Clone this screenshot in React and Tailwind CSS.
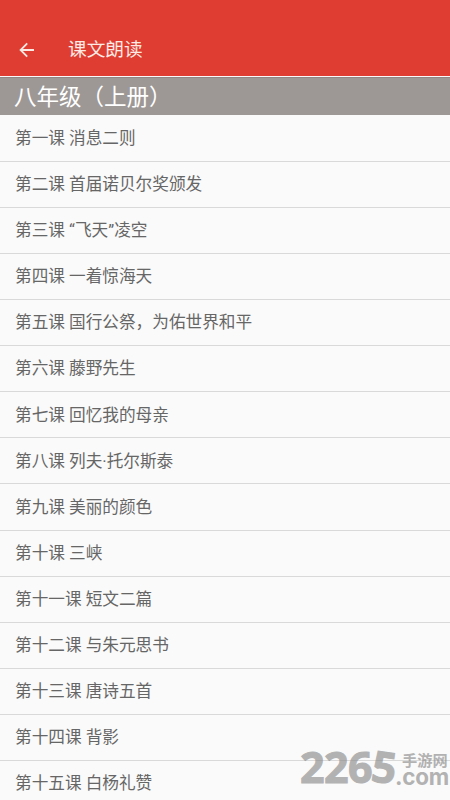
import React from 'react';

const lessons = [
  '第一课 消息二则',
  '第二课 首届诺贝尔奖颁发',
  '第三课 “飞天”凌空',
  '第四课 一着惊海天',
  '第五课 国行公祭，为佑世界和平',
  '第六课 藤野先生',
  '第七课 回忆我的母亲',
  '第八课 列夫·托尔斯泰',
  '第九课 美丽的颜色',
  '第十课 三峡',
  '第十一课 短文二篇',
  '第十二课 与朱元思书',
  '第十三课 唐诗五首',
  '第十四课 背影',
  '第十五课 白杨礼赞',
];

const BackIcon = () => (
  <svg width="16" height="16" viewBox="0 0 16 16" fill="none" stroke="#fdeae4" strokeWidth="1.8">
    <path d="M15 8H2M8.2 1.4L1.6 8l6.6 6.6" />
  </svg>
);

const Header = () => (
  <header className="flex h-[76px] shrink-0 items-end bg-[#df3d32] text-[#fdeae4]">
    <div className="flex h-[53px] w-full items-center pl-[19px]">
      <button aria-label="返回">
        <BackIcon />
      </button>
      <h1 className="ml-[33px] pt-[2px] text-[18.7px] leading-none">课文朗读</h1>
    </div>
  </header>
);

const LessonRow = ({ title }) => (
  <li className="flex h-[46.08px] shrink-0 items-center border-b border-[#d9d9d9] pt-[2.4px] pl-[15px] text-[16.65px] text-[#666]">
    {title}
  </li>
);

const Watermark = () => (
  <div className="pointer-events-none absolute top-[743px] left-[300px] flex h-[48px] w-[150px] leading-none font-bold text-[#8c8c8c] opacity-65 select-none">
    <div className="flex w-[97px] font-['Open_Sans'] text-[43px] leading-[48px] [-webkit-text-stroke:1px_#8c8c8c]">
      <span className="w-[24px]">2</span>
      <span className="w-[24px]">2</span>
      <span className="w-[24px]">6</span>
      <span className="w-[25px] rotate-[8deg]">5</span>
    </div>
    <div className="flex flex-col pt-[10px]">
      <span className="ml-[5px] h-[17px] text-[15.2px] leading-[17px] whitespace-nowrap">手游网</span>
      <span className="-ml-[2px] h-[14px] font-[Inter] text-[22.4px] leading-[14px] tracking-[-0.2px] whitespace-nowrap">.com</span>
    </div>
  </div>
);

const App = () => {
  return (
    <div className="relative flex h-[800px] w-[450px] flex-col overflow-hidden bg-[#fafafa] font-[Roboto,'Noto_Sans_CJK_SC',sans-serif]">
      <Header />
      <h2 className="mt-px flex h-[38px] shrink-0 items-center border-t border-[#928482] bg-[#9d9896] pt-[2px] pl-[14px] text-[22.5px] text-white">
        八年级（上册）
      </h2>
      <ul className="flex flex-col pt-[0.8px]">
        {lessons.map((title) => (
          <LessonRow key={title} title={title} />
        ))}
      </ul>
      <Watermark />
    </div>
  );
};

export default App;
